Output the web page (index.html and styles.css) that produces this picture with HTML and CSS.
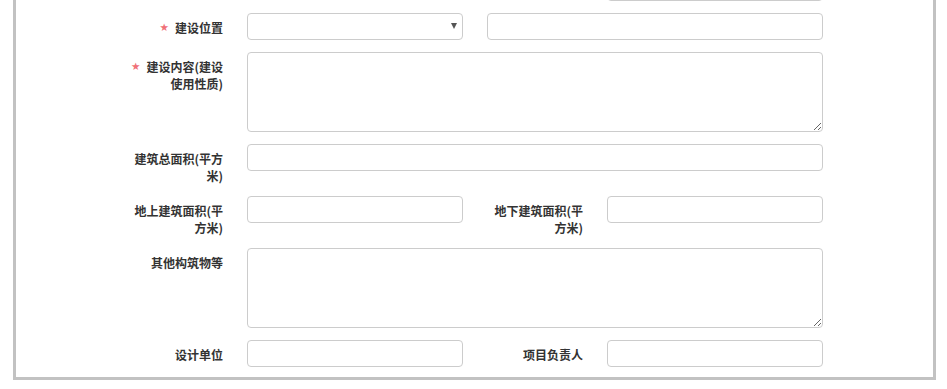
FILE: index.html
```html
<!DOCTYPE html>
<html lang="zh-CN">
<head>
  <meta charset="UTF-8">
  <meta name="viewport" content="width=device-width, initial-scale=1.0">
  <title>建设信息</title>
  <link rel="stylesheet" href="styles.css">
</head>
<body>
  <div class="page">
    <!-- Project info panel -->
    <div class="panel">
      <form class="form">

        <!-- Previous row (scrolled off) -->
        <div class="row">
          <div class="label"></div>
          <div class="spacer"></div>
          <div class="label second"></div>
          <input type="text" class="control half">
        </div>

        <!-- Location -->
        <div class="row">
          <label class="label"><span class="req">★</span>建设位置</label>
          <div class="select-wrap">
            <select class="control select"></select>
          </div>
          <input type="text" class="control wide address">
        </div>

        <!-- Content -->
        <div class="row">
          <label class="label"><span class="req">★</span>建设内容(建设使用性质)</label>
          <textarea class="control wide area"></textarea>
        </div>

        <!-- Total area -->
        <div class="row">
          <label class="label">建筑总面积(平方米)</label>
          <input type="text" class="control wide">
        </div>

        <!-- Above / below ground area -->
        <div class="row">
          <label class="label">地上建筑面积(平方米)</label>
          <input type="text" class="control half">
          <label class="label second">地下建筑面积(平方米)</label>
          <input type="text" class="control half">
        </div>

        <!-- Other structures -->
        <div class="row">
          <label class="label">其他构筑物等</label>
          <textarea class="control wide area"></textarea>
        </div>

        <!-- Design unit / project lead -->
        <div class="row last">
          <label class="label">设计单位</label>
          <input type="text" class="control half">
          <label class="label second">项目负责人</label>
          <input type="text" class="control half">
        </div>

      </form>
    </div>
  </div>
</body>
</html>
```

FILE: styles.css
```css
/* Page */
body {
  margin: 0;
  padding: 0;
  background: #fff;
  font-family: "Noto Sans CJK SC", "Microsoft YaHei", sans-serif;
  overflow: hidden;
}

.page {
  padding: 0 11px 9px 13px;
}

/* Panel with grey frame, top is scrolled off */
.panel {
  border: 3px solid #c2c2c2;
  border-top: none;
  padding-bottom: 10px;
}

.form {
  width: 693px;
  margin: -26px 0 0 114px;
}

/* Form rows */
.row {
  display: flex;
  align-items: flex-start;
  margin-bottom: 12px;
}

.row.last {
  margin-bottom: 0;
}

.label {
  width: 93px;
  flex: none;
  padding-top: 6px;
  font-size: 12px;
  line-height: 17px;
  font-weight: 700;
  color: #333;
  text-align: right;
  word-break: break-all;
}

.label.second {
  margin-left: 27px;
}

/* required mark */
.req {
  display: inline-block;
  vertical-align: top;
  height: 17px;
  line-height: 17px;
  font-family: "DejaVu Sans", sans-serif;
  font-size: 10.5px;
  font-weight: 400;
  color: #f07178;
  margin-right: 6px;
}

.spacer {
  width: 216px;
  margin-left: 24px;
  flex: none;
}

/* Inputs */
.control {
  box-sizing: border-box;
  height: 27px;
  margin: 0 0 0 24px;
  padding: 5px 10px;
  border: 1px solid #ccc;
  border-radius: 4px;
  background: #fff;
  font-family: inherit;
  font-size: 12px;
  color: #555;
  outline: none;
}

.control.half {
  width: 216px;
  flex: none;
}

.control.wide {
  flex: 1;
  min-width: 0;
}

.control.address {
  margin-left: 24px;
}

.control.area {
  height: 80px;
}

/* Select with a small triangle */
.select-wrap {
  position: relative;
  width: 216px;
  margin-left: 24px;
  flex: none;
}

.select-wrap .control {
  width: 100%;
  margin-left: 0;
  -webkit-appearance: none;
  appearance: none;
}

.select-wrap::after {
  content: "";
  position: absolute;
  right: 6px;
  top: 10px;
  width: 0;
  height: 0;
  border-left: 3px solid transparent;
  border-right: 3px solid transparent;
  border-top: 6px solid #555;
  pointer-events: none;
}
```
